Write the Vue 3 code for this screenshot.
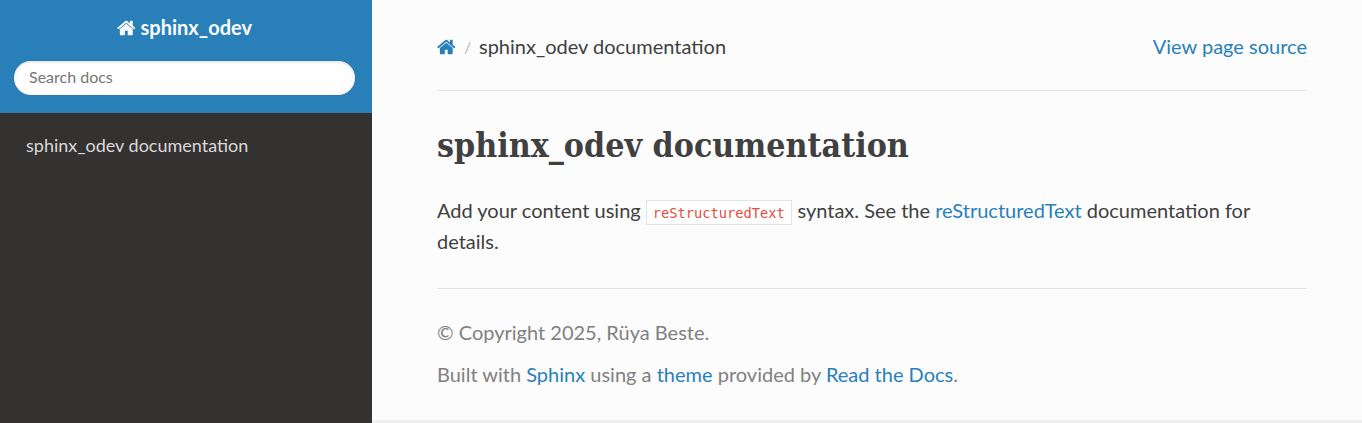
<script setup>
const homePath =
  'M1408 992v480q0 26-19 45t-45 19h-384v-384h-256v384h-384q-26 0-45-19t-19-45v-480q0-1 .5-3t.5-3l575-474 575 474q1 2 1 6zm223-69l-62 74q-8 9-21 11h-3q-13 0-21-7l-692-577-692 577q-12 8-24 7-13-2-21-11l-62-74q-8-10-7-23.500t11-21.500l719-599q32-26 76-26t76 26l244 204v-195q0-14 9-23t23-9h192q14 0 23 9t9 23v408l219 182q10 8 11 21.500t-7 23.500z'
</script>

<template>
  <div class="page">
    <nav class="side">
      <div class="side-head">
        <a class="brand">
          <svg class="home" viewBox="0 0 1664 1792"><path :d="homePath" /></svg>
          <span>sphinx_odev</span>
        </a>
        <input class="search" type="text" placeholder="Search docs" />
      </div>
      <a class="side-link">sphinx_odev documentation</a>
    </nav>
    <section class="main">
      <div class="content">
        <div class="crumbs">
          <a class="crumb-home"><svg class="home" viewBox="0 0 1664 1792"><path :d="homePath" /></svg></a>
          <span class="slash">/</span>
          <span>sphinx_odev documentation</span>
          <a class="source">View page source</a>
        </div>
        <hr />
        <h1>sphinx_odev documentation</h1>
        <p class="body">Add your content using <code>reStructuredText</code> syntax. See the <a>reStructuredText</a> documentation for details.</p>
        <hr />
        <footer>
          <p>© Copyright 2025, Rüya Beste.</p>
          <p>Built with <a>Sphinx</a> using a <a>theme</a> provided by <a>Read the Docs</a>.</p>
        </footer>
      </div>
    </section>
  </div>
</template>

<style>
body {
  overflow: hidden;
}
</style>

<style scoped>
.page {
  display: flex;
  height: 423px;
  font-family: Lato, "Open Sans", sans-serif;
  font-size: 20px;
  color: #404040;
  background: #efefef;
}
.side {
  width: 372px;
  flex: none;
  background: #343131;
}
.side-head {
  box-sizing: border-box;
  height: 113px;
  padding: 12px 17px 0 14px;
  background: #2980b9;
}
.brand {
  display: flex;
  justify-content: center;
  align-items: center;
  gap: 5px;
  height: 30px;
  margin-bottom: 19px;
  color: #fcfcfc;
  font-weight: 700;
}
.home {
  display: block;
  width: 18.57px;
  height: 20px;
  margin-top: 2px;
  fill: currentColor;
}
.search {
  display: block;
  box-sizing: border-box;
  width: 341px;
  height: 34px;
  padding: 0 15px 3px;
  border: 0;
  border-radius: 50px;
  outline: none;
  background: #fff;
  box-shadow: inset 0 1px 3px #ddd, 0 0 0 1px #2472a455;
  font-family: inherit;
  font-size: 16px;
}
.search::placeholder {
  color: #757575;
}
.side-link {
  display: block;
  padding: 19px 26px;
  font-size: 18px;
  line-height: 26px;
  color: #d9d9d9;
}
.main {
  flex: 1;
  height: 420px;
  background: #fcfcfc;
}
.content {
  width: 870px;
  margin-left: 65px;
  padding-top: 31px;
}
.crumbs {
  display: flex;
  align-items: center;
  height: 30px;
}
.crumb-home {
  width: 27px;
}
.slash {
  width: 15px;
  font-size: 16px;
  color: #bbb;
}
.source {
  margin-left: auto;
}
a {
  color: #2980b9;
}
hr {
  height: 1px;
  margin: 29px 0 0;
  border: 0;
  background: #e1e4e5;
}
h1 {
  margin: 29px 0 0;
  width: max-content;
  height: 50px;
  line-height: 50px;
  font-family: "Roboto Slab", "DejaVu Serif", serif;
  font-size: 34px;
  font-weight: 700;
  white-space: nowrap;
  transform: scaleX(0.89);
  transform-origin: 0 50%;
}
.body {
  margin: 25px 0 0;
  line-height: 31px;
  height: 62px;
}
.body + hr {
  margin-top: 31px;
}
code {
  margin-right: 0.6px;
  padding: 4px 6px 3px;
  border: 1px solid #e1e4e5;
  background: #fff;
  color: #e74c3c;
  font-family: "DejaVu Sans Mono", monospace;
  font-size: 13.7px;
  line-height: 1;
}
footer {
  margin-top: 28px;
  color: gray;
}
footer p {
  margin: 0 0 12px;
  line-height: 30px;
}
</style>
